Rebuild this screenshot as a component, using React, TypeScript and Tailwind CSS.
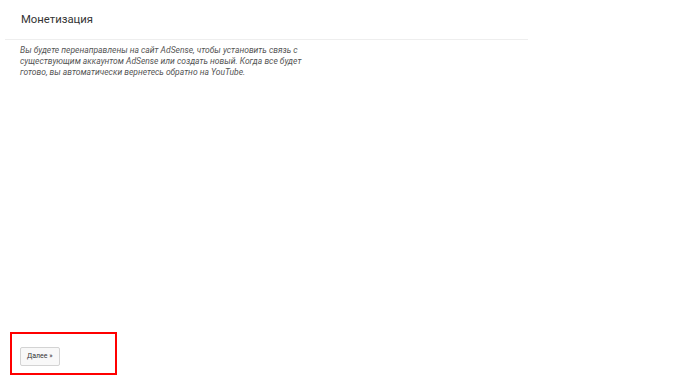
export default function App() {
  return (
    <div className="w-[700px] h-[387px] bg-white flex flex-col font-['Roboto',sans-serif] overflow-hidden">
      <div className="w-[523px] ml-[5px] border-b border-[#eeeeee] h-[40px] flex items-center pl-[16px]">
        <h1 className="text-[11.3px] text-[#333333] font-normal pt-[1px]">Монетизация</h1>
      </div>

      <div className="pl-[20px] pt-[5px] w-[310px]">
        <p className="text-[8.5px] leading-[11px] italic text-[#555555]">
          Вы будете перенаправлены на сайт AdSense, чтобы установить связь с
          существующим аккаунтом AdSense или создать новый. Когда все будет
          готово, вы автоматически вернетесь обратно на YouTube.
        </p>
      </div>

      <div className="flex-1" />

      <div className="ml-[10px] mb-[12px] w-[107px] h-[43px] border-2 border-[#ff0000] flex items-end pl-[8px] pb-[7px]">
        <button className="h-[19px] px-[6px] bg-[#f8f8f8] border border-[#d3d3d3] rounded-[2px] text-[7px] text-[#333333] font-normal">
          Далее »
        </button>
      </div>
    </div>
  );
}
